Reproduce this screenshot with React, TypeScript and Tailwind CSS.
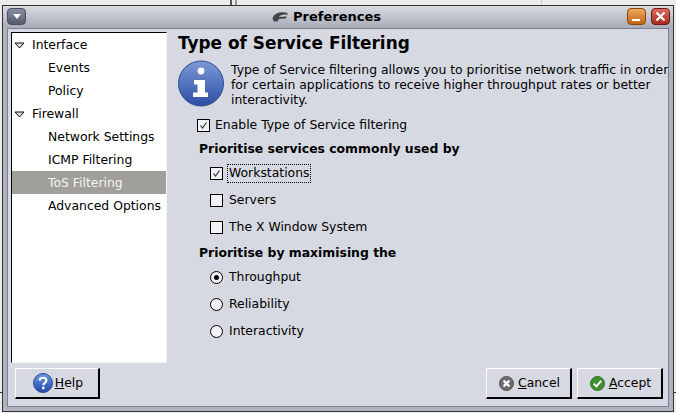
const font = "font-['DejaVu_Sans',sans-serif]"

function Arrow() {
  return (
    <svg width="11" height="7" viewBox="0 0 11 7" className="shrink-0">
      <path d="M1 1 H10 L5.5 6 Z" fill="#d6d9e1" stroke="#111" strokeWidth="1" />
    </svg>
  )
}

function TreeRow({ label, top, selected }: { label: string; top?: boolean; selected?: boolean }) {
  return (
    <div
      className={`flex h-[23px] items-center whitespace-nowrap pt-[2px] ${selected ? 'bg-[#a09f99] text-[#f4f4f2]' : 'text-black'} ${top ? 'pl-[2px]' : 'pl-[36px]'}`}
    >
      {top && <Arrow />}
      <span className={top ? 'ml-[7px]' : ''}>{label}</span>
    </div>
  )
}

function Check({ checked }: { checked?: boolean }) {
  return (
    <span className="flex h-[13px] w-[13px] shrink-0 items-center justify-center border border-black bg-[#f2f3f5]">
      {checked && (
        <svg width="9" height="9" viewBox="0 0 9 9">
          <path d="M1.5 4.5 L3.5 7 L7.5 1.5" fill="none" stroke="#333" strokeWidth="1.2" />
        </svg>
      )}
    </span>
  )
}

function Radio({ checked }: { checked?: boolean }) {
  return (
    <span className="flex h-[13px] w-[13px] shrink-0 items-center justify-center rounded-full border border-black bg-[#f2f3f5]">
      {checked && <span className="h-[5px] w-[5px] rounded-full bg-black" />}
    </span>
  )
}

function InfoIcon() {
  return (
    <svg width="46" height="47" viewBox="0 0 46 47" className="shrink-0">
      <defs>
        <linearGradient id="info" x1="0" y1="0" x2="0" y2="1">
          <stop offset="0" stopColor="#7d9ad6" />
          <stop offset="1" stopColor="#2a4da3" />
        </linearGradient>
      </defs>
      <circle cx="23" cy="23.5" r="22.5" fill="url(#info)" stroke="#2b4a93" />
      <circle cx="23" cy="11" r="3.4" fill="#fff" />
      <path d="M16 20 H27 V32.5 H30 V37 H15 V32.5 H19.5 V24.5 H16 Z" fill="#fff" />
    </svg>
  )
}

function HelpIcon() {
  return (
    <svg width="20" height="20" viewBox="0 0 20 20" className="shrink-0">
      <defs>
        <linearGradient id="help" x1="0" y1="0" x2="0" y2="1">
          <stop offset="0" stopColor="#6f97e4" />
          <stop offset="1" stopColor="#1f47a8" />
        </linearGradient>
      </defs>
      <circle cx="10" cy="10" r="9.5" fill="url(#help)" stroke="#2a4a98" />
      <path d="M6.6 7.6 C6.8 3.8 13.4 3.8 13.4 7.6 C13.4 10 10.4 9.8 10.4 12.2" fill="none" stroke="#fff" strokeWidth="2.2" />
      <circle cx="10.3" cy="15" r="1.4" fill="#fff" />
    </svg>
  )
}

function CancelIcon() {
  return (
    <svg width="15" height="15" viewBox="0 0 15 15" className="shrink-0">
      <circle cx="7.5" cy="7.5" r="7" fill="#6c6c6c" stroke="#555" />
      <path d="M4.6 4.6 L10.4 10.4 M10.4 4.6 L4.6 10.4" stroke="#fff" strokeWidth="2.2" />
    </svg>
  )
}

function AcceptIcon() {
  return (
    <svg width="15" height="15" viewBox="0 0 15 15" className="shrink-0">
      <circle cx="7.5" cy="7.5" r="7" fill="#3f8f30" stroke="#2f7524" />
      <path d="M3.8 7.8 L6.4 10.4 L11.2 4.8" fill="none" stroke="#fff" strokeWidth="2" />
    </svg>
  )
}

function DialogButton({ children, className }: { children: React.ReactNode; className?: string }) {
  return (
    <button
      className={`flex h-[31px] items-center justify-center border border-b-2 border-r-2 border-b-black border-l-white border-r-black border-t-white bg-[#d6d9e1] pl-[2px] ${className ?? ''}`}
    >
      {children}
    </button>
  )
}

export default function App() {
  return (
    <div className={`relative h-[413px] w-[676px] overflow-hidden bg-[#ececec] pl-[2px] pt-[5px] text-[12.4px] text-black ${font}`}>
      {/* desktop window edges behind the dialog */}
      <div className="absolute left-[230px] top-0 h-[5px] w-[2px] bg-[#555]" />
      <div className="absolute left-[235px] top-0 h-[5px] w-[2px] bg-[#999]" />
      <div className="absolute left-[541px] top-0 h-[5px] w-px bg-[#ccc]" />
      <div className="absolute left-0 top-[392px] h-px w-[2px] bg-[#333]" />
      <div className="absolute right-0 top-[392px] h-px w-[2px] bg-[#333]" />

      <div className="relative flex h-[407px] w-[672px] flex-col border border-[#333] bg-[#aeb2be]">
        {/* Title bar */}
        <div className="flex h-[22px] shrink-0 items-center justify-between bg-gradient-to-b from-[#d9dbe1] to-[#a8acb8] pb-px pl-[4px] pr-[3px]">
          <div className="flex h-[17px] w-[19px] items-center justify-center rounded-[4px] border border-[#4a5060] bg-gradient-to-b from-[#8a90a3] to-[#565c70]">
            <span className="h-0 w-0 border-x-[4px] border-t-[5px] border-x-transparent border-t-white" />
          </div>
          <div className="flex items-center gap-[5px] text-[13px] font-bold">
            <svg width="16" height="11" viewBox="0 0 14 11" preserveAspectRatio="none">
              <path d="M0.5 7 C2 1.5 9 0 13.5 2 L13.5 4 C10 3 7 4 6 6 L13 5.5 L12 7.5 L6 8 L5 10.5 L2 10.5 C1 9.5 0.5 8.5 0.5 7 Z" fill="#444" />
            </svg>
            <span>Preferences</span>
          </div>
          <div className="flex gap-[5px]">
            <div className="flex h-[17px] w-[19px] items-end justify-center rounded-[4px] border border-[#8a4a08] bg-gradient-to-b from-[#f0a860] to-[#c06510] pb-[3px]">
              <span className="h-[2px] w-[8px] bg-white" />
            </div>
            <div className="flex h-[17px] w-[19px] items-center justify-center rounded-[4px] border border-[#6e1a14] bg-gradient-to-b from-[#dc6a5e] to-[#a82a20]">
              <svg width="11" height="11" viewBox="0 0 11 11">
                <path d="M1.5 1.5 L9.5 9.5 M9.5 1.5 L1.5 9.5" stroke="#fff" strokeWidth="2.2" />
              </svg>
            </div>
          </div>
        </div>

        {/* Dialog body */}
        <div className="mx-[4px] mb-[4px] flex min-h-0 flex-1 flex-col border border-[#7d8190] bg-[#d6d9e1] px-[3px] pb-[7px] pt-[3px]">
          <div className="flex min-h-0 flex-1">
            <div className="h-[331px] w-[156px] shrink-0 border-b border-l border-r border-t border-b-[#f4f4f4] border-l-black border-r-[#f4f4f4] border-t-black bg-white">
              <TreeRow label="Interface" top />
              <TreeRow label="Events" />
              <TreeRow label="Policy" />
              <TreeRow label="Firewall" top />
              <TreeRow label="Network Settings" />
              <TreeRow label="ICMP Filtering" />
              <TreeRow label="ToS Filtering" selected />
              <TreeRow label="Advanced Options" />
            </div>

            <div className="ml-[11px] min-w-0 flex-1 whitespace-nowrap">
              <h1 className="text-[16.9px] font-bold leading-[22px]">Type of Service Filtering</h1>
              <div className="mt-[6px] flex gap-[7px]">
                <InfoIcon />
                <p className="pt-[2px] leading-[15px]">
                  Type of Service filtering allows you to prioritise network traffic in order
                  <br />
                  for certain applications to receive higher throughput rates or better
                  <br />
                  interactivity.
                </p>
              </div>

              <label className="ml-[19px] mt-[7px] flex h-[23px] items-center gap-[5px]">
                <Check checked />
                <span>Enable Type of Service filtering</span>
              </label>
              <h2 className="ml-[21px] mt-px h-[22px] font-bold leading-[21px]">Prioritise services commonly used by</h2>

              <label className="ml-[32px] flex h-[27px] items-center gap-[4px]">
                <Check checked />
                <span className="flex h-[19px] items-center border border-dotted border-black px-px">Workstations</span>
              </label>
              <label className="ml-[32px] flex h-[27px] items-center gap-[6px]">
                <Check />
                <span>Servers</span>
              </label>
              <label className="ml-[32px] flex h-[27px] items-center gap-[6px]">
                <Check />
                <span>The X Window System</span>
              </label>

              <h2 className="ml-[21px] mt-px h-[22px] font-bold leading-[21px]">Prioritise by maximising the</h2>

              <label className="ml-[32px] flex h-[27px] items-center gap-[6px]">
                <Radio checked />
                <span>Throughput</span>
              </label>
              <label className="ml-[32px] flex h-[27px] items-center gap-[6px]">
                <Radio />
                <span>Reliability</span>
              </label>
              <label className="ml-[32px] flex h-[27px] items-center gap-[6px]">
                <Radio />
                <span>Interactivity</span>
              </label>
            </div>
          </div>

          <div className="flex shrink-0 justify-between pl-[4px] pr-[2px]">
            <DialogButton className="w-[85px] gap-[2px]">
              <HelpIcon />
              <span><span className="underline">H</span>elp</span>
            </DialogButton>
            <div className="flex gap-[5px]">
              <DialogButton className="w-[86px] gap-[4px]">
                <CancelIcon />
                <span><span className="underline">C</span>ancel</span>
              </DialogButton>
              <DialogButton className="w-[86px] gap-[4px]">
                <AcceptIcon />
                <span><span className="underline">A</span>ccept</span>
              </DialogButton>
            </div>
          </div>
        </div>
      </div>
    </div>
  )
}
